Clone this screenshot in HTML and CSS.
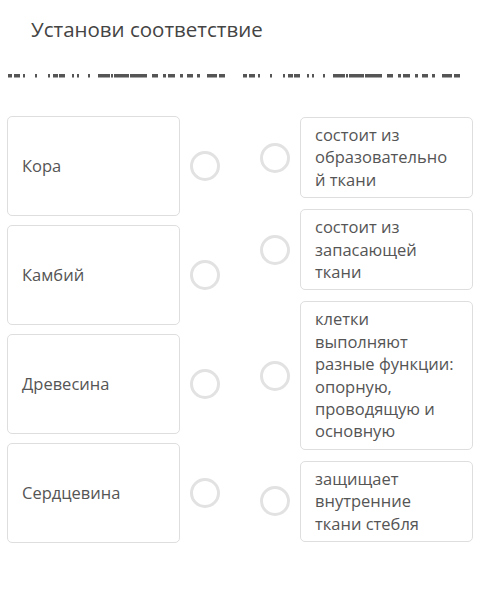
FILE: index.html
```html
<!DOCTYPE html>
<html lang="ru">

<head>
    <meta charset="UTF-8">
    <meta name="viewport" content="width=device-width, initial-scale=1.0">
    <title>Установи соответствие</title>
    <link rel="stylesheet" href="styles.css">
</head>

<body>
    <div class="task">
        <h1 class="task-title">Установи соответствие</h1>

        <!-- garbled strip under the title -->
        <svg class="strip" width="500" height="5" viewBox="0 0 500 5">
            <g id="dashes" fill="#555">
                <rect x="8" y="1" width="4" height="3.5"/>
                <rect x="14" y="1" width="6" height="3.5"/>
                <rect x="23" y="1" width="2" height="3.5"/>
                <rect x="35" y="1" width="2" height="3.5"/>
                <rect x="48" y="1" width="2" height="3.5"/>
                <rect x="53" y="1" width="5" height="3.5"/>
                <rect x="59" y="1" width="6" height="3.5"/>
                <rect x="72" y="1" width="2" height="3.5"/>
                <rect x="77" y="1" width="2" height="3.5"/>
                <rect x="88" y="1" width="2" height="3.5"/>
                <rect x="98" y="1" width="12" height="3.5"/>
                <rect x="111" y="1" width="2" height="3.5"/>
                <rect x="114" y="1" width="15" height="3.5"/>
                <rect x="130" y="1" width="17" height="3.5"/>
                <rect x="152" y="1" width="6" height="3.5"/>
                <rect x="163" y="1" width="3" height="3.5"/>
                <rect x="168" y="1" width="7" height="3.5"/>
                <rect x="180" y="1" width="3" height="3.5"/>
                <rect x="187" y="1" width="6" height="3.5"/>
                <rect x="197" y="1" width="3" height="3.5"/>
                <rect x="207" y="1" width="10" height="3.5"/>
                <rect x="219" y="1" width="6" height="3.5"/>
            </g>
            <use href="#dashes" x="235"/>
        </svg>

        <div class="board">
            <div class="column column-left">
                <div class="item">
                    <div class="card card-term">Кора</div>
                    <span class="dot"></span>
                </div>
                <div class="item">
                    <div class="card card-term">Камбий</div>
                    <span class="dot"></span>
                </div>
                <div class="item">
                    <div class="card card-term">Древесина</div>
                    <span class="dot"></span>
                </div>
                <div class="item">
                    <div class="card card-term">Сердцевина</div>
                    <span class="dot"></span>
                </div>
            </div>

            <div class="column column-right">
                <div class="item">
                    <span class="dot"></span>
                    <div class="card card-answer">состоит из образовательно<br>й ткани</div>
                </div>
                <div class="item">
                    <span class="dot"></span>
                    <div class="card card-answer">состоит из запасающей ткани</div>
                </div>
                <div class="item">
                    <span class="dot"></span>
                    <div class="card card-answer">клетки выполняют разные функции: опорную, проводящую и основную</div>
                </div>
                <div class="item">
                    <span class="dot"></span>
                    <div class="card card-answer">защищает внутренние ткани стебля</div>
                </div>
            </div>
        </div>
    </div>
</body>

</html>
```

FILE: styles.css
```css
body {
    margin: 0;
    background-color: #fff;
    font-family: "Open Sans", "Noto Sans", sans-serif;
    color: #555;
}

.task {
    width: 500px;
    height: 589px;
}

.task-title {
    margin: 0;
    padding: 15px 0 0 31px;
    font-size: 20.5px;
    line-height: 28px;
    font-weight: 400;
    color: #444;
}

.strip {
    display: block;
    margin-top: 30px;
}

.board {
    display: flex;
    gap: 40px;
    margin-top: 38px;
    padding-left: 7px;
}

.column {
    display: flex;
    flex-direction: column;
    width: 213px;
}

.column-left {
    gap: 9px;
}

.column-right {
    gap: 11px;
    margin-top: 1px;
}

.item {
    display: flex;
    align-items: center;
    gap: 10px;
}

.card {
    box-sizing: border-box;
    width: 173px;
    padding: 6px 14px;
    background-color: #fff;
    border: 1px solid #dedede;
    border-radius: 5px;
    font-size: 16.5px;
    line-height: 22.4px;
    color: #555;
}

.card-term {
    display: flex;
    align-items: center;
    height: 100px;
}

.card-answer {
    overflow-wrap: anywhere;
}

.dot {
    box-sizing: border-box;
    flex: none;
    width: 30px;
    height: 30px;
    border: 3px solid #e2e2e2;
    border-radius: 50%;
}
```
